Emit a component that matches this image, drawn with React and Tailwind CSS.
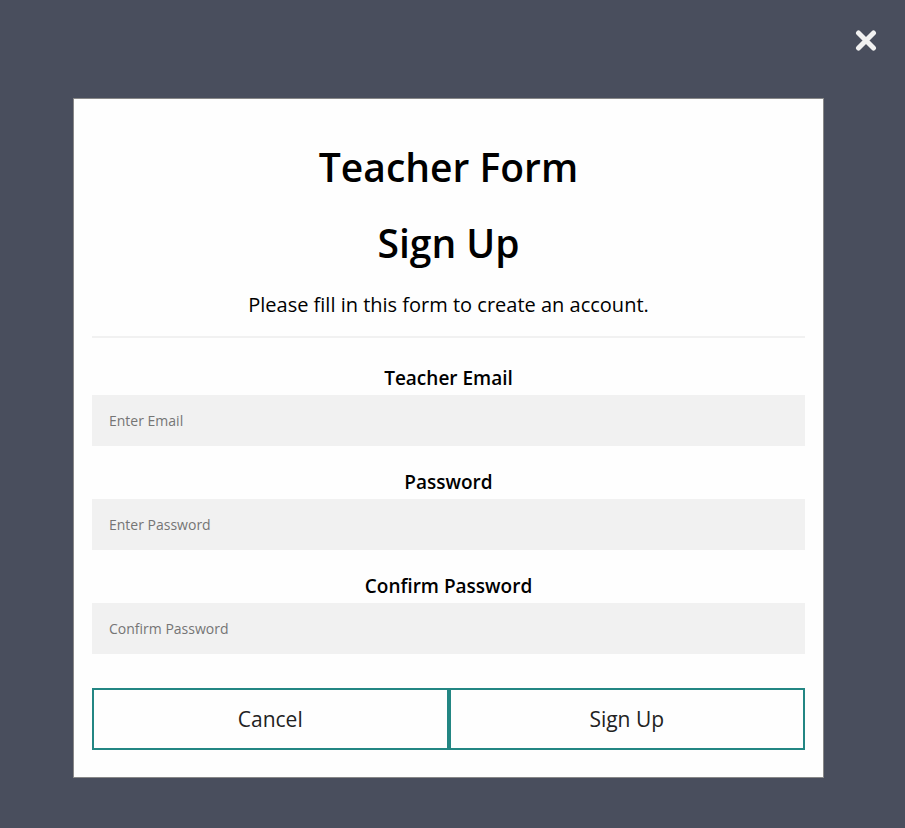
const fields = [
  { id: "email", label: "Teacher Email", placeholder: "Enter Email", type: "email" },
  { id: "password", label: "Password", placeholder: "Enter Password", type: "password" },
  { id: "confirm", label: "Confirm Password", placeholder: "Confirm Password", type: "password" },
];

function Field({ id, label, placeholder, type }) {
  return (
    <div className="flex flex-col">
      <label htmlFor={id} className="text-center text-[19px] leading-[34px] font-semibold">
        {label}
      </label>
      <input
        id={id}
        type={type}
        placeholder={placeholder}
        className="h-[51px] w-full bg-[#f1f1f1] px-[17px] text-[14px] placeholder:text-[#757575]"
      />
    </div>
  );
}

export default function App() {
  return (
    <div className="flex min-h-screen flex-col bg-[#494e5d] pr-2 pb-[50px] font-['Trebuchet_MS','Open_Sans',sans-serif] text-black">
      <div className="flex h-[98px] items-start justify-end pt-[30px] pr-5">
        <button type="button" aria-label="Close" className="text-[#f1f1f1]">
          <svg viewBox="0 0 22 22" className="size-[22px]" fill="none" stroke="currentColor" strokeWidth="5" strokeLinecap="round">
            <path d="M3.5 3 18.5 18M18.5 3 3.5 18" />
          </svg>
        </button>
      </div>
      <form className="mx-[73px] border border-[#888888] bg-[#fefefe] px-[18px] pt-[40px] pb-[27px]">
        <h1 className="text-center text-[39px] leading-[56px] font-semibold">Teacher Form</h1>
        <h1 className="mt-[20px] text-center text-[39px] leading-[56px] font-semibold">Sign Up</h1>
        <p className="mt-[20px] text-center text-[20px] leading-[28px]">
          Please fill in this form to create an account.
        </p>
        <hr className="mt-[17px] mb-[23px] border-t-2 border-[#f1f1f1]" />
        <div className="flex flex-col gap-[19px]">
          {fields.map((field) => (
            <Field key={field.id} {...field} />
          ))}
        </div>
        <div className="mt-[34px] flex">
          <button type="button" className="h-[62px] flex-1 border-2 border-[#238683] pt-[2px] text-[21px] text-[#222222]">
            Cancel
          </button>
          <button type="submit" className="h-[62px] flex-1 border-2 border-[#238683] pt-[2px] text-[21px] text-[#222222]">
            Sign Up
          </button>
        </div>
      </form>
    </div>
  );
}
